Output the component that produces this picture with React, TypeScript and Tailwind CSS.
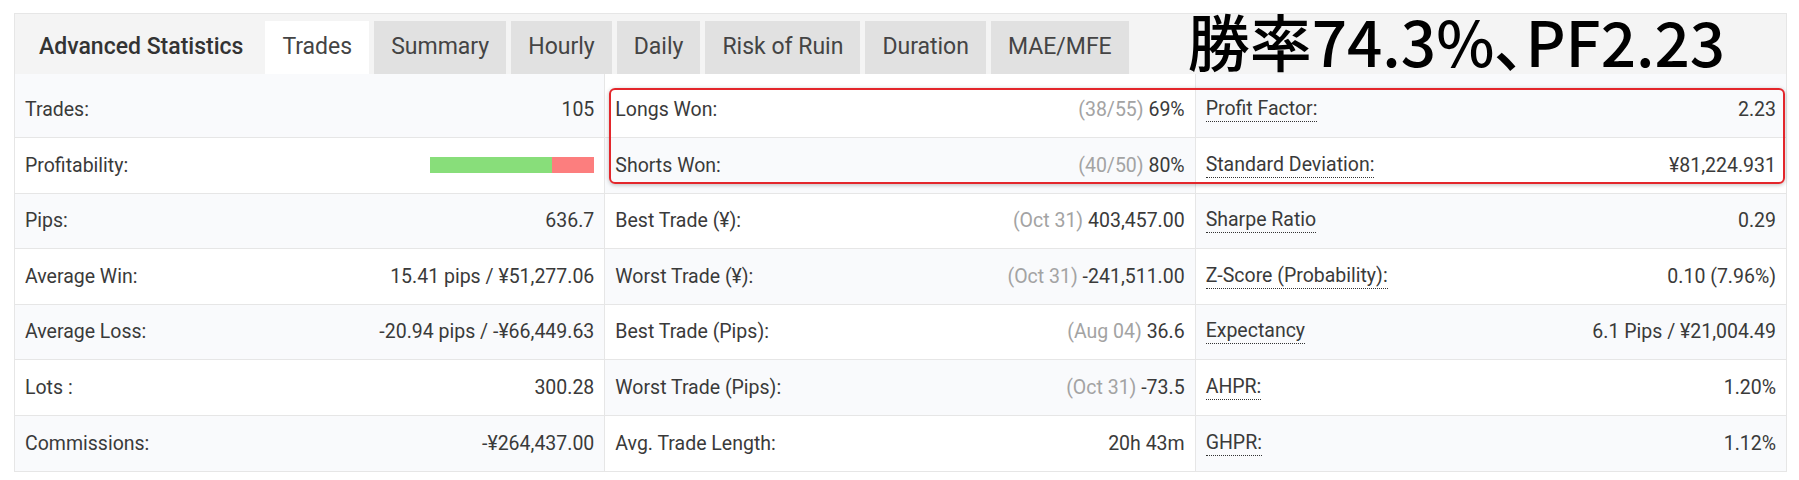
import React from "react";

type Cell = { label: string; pre?: string; value?: string; bar?: boolean };

const col1: Cell[] = [
  { label: "Trades:", value: "105" },
  { label: "Profitability:", bar: true },
  { label: "Pips:", value: "636.7" },
  { label: "Average Win:", value: "15.41 pips / ¥51,277.06" },
  { label: "Average Loss:", value: "-20.94 pips / -¥66,449.63" },
  { label: "Lots :", value: "300.28" },
  { label: "Commissions:", value: "-¥264,437.00" },
];

const col2: Cell[] = [
  { label: "Longs Won:", pre: "(38/55)", value: "69%" },
  { label: "Shorts Won:", pre: "(40/50)", value: "80%" },
  { label: "Best Trade (¥):", pre: "(Oct 31)", value: "403,457.00" },
  { label: "Worst Trade (¥):", pre: "(Oct 31)", value: "-241,511.00" },
  { label: "Best Trade (Pips):", pre: "(Aug 04)", value: "36.6" },
  { label: "Worst Trade (Pips):", pre: "(Oct 31)", value: "-73.5" },
  { label: "Avg. Trade Length:", value: "20h 43m" },
];

const col3: Cell[] = [
  { label: "Profit Factor:", value: "2.23" },
  { label: "Standard Deviation:", value: "¥81,224.931" },
  { label: "Sharpe Ratio", value: "0.29" },
  { label: "Z-Score (Probability):", value: "0.10 (7.96%)" },
  { label: "Expectancy", value: "6.1 Pips / ¥21,004.49" },
  { label: "AHPR:", value: "1.20%" },
  { label: "GHPR:", value: "1.12%" },
];

const tabs = ["Summary", "Hourly", "Daily", "Risk of Ruin", "Duration", "MAE/MFE"];

function Column({ cells, colIndex }: { cells: Cell[]; colIndex: number }) {
  return (
    <div className={colIndex < 2 ? "flex flex-col border-r border-[#e6e6e6]" : "flex flex-col"}>
      {cells.map((c, i) => {
        const light = colIndex === 1 ? i % 2 === 1 : i % 2 === 0;
        const first = i === 0;
        const last = i === cells.length - 1;
        return (
          <div
            key={i}
            className={[
              "flex items-center justify-between px-[10px]",
              first ? "h-[64px] pt-[8px]" : "h-[55.5px]",
              last ? "" : "border-b border-[#e6e6e6]",
              light ? "bg-[#f9fafc]" : "bg-white",
            ].join(" ")}
          >
            {colIndex === 2 ? (
              <span className="border-b border-dotted border-[#333] leading-[24px]">{c.label}</span>
            ) : (
              <span>{c.label}</span>
            )}
            {c.bar ? (
              <div className="flex h-[16px] w-[164px]">
                <div className="h-full w-[122px] bg-[#88de7a]" />
                <div className="h-full flex-1 bg-[#fc7e7e]" />
              </div>
            ) : (
              <span>
                {c.pre && <span className="text-[#a3a3a3]">{c.pre} </span>}
                {c.value}
              </span>
            )}
          </div>
        );
      })}
    </div>
  );
}

export default function App() {
  return (
    <div className="w-[1799px] h-[480px] bg-white pt-[13px] pl-[14px] font-['Roboto','Liberation_Sans',sans-serif]">
      <div className="relative w-[1773px] border border-[#e6e6e6]">
        <div className="flex h-[60px] items-end bg-[#f4f4f4] pl-[24px] text-[23px] text-[#444]">
          <div className="flex h-[53px] items-center mr-[22px] font-medium text-[#333]">
            Advanced Statistics
          </div>
          <div className="flex gap-[5px]">
            <div className="flex h-[53px] items-center bg-white px-[17px]">Trades</div>
            {tabs.map((t) => (
              <div key={t} className="flex h-[53px] items-center bg-[#e1e1e1] px-[17px]">
                {t}
              </div>
            ))}
          </div>
          <div className="ml-[59px] mb-[8px] self-end whitespace-nowrap font-['Noto_Sans_CJK_JP',sans-serif] text-[62px] font-medium leading-[52px] text-black [font-feature-settings:'palt']">
            勝率74.3%、PF2.23
          </div>
        </div>
        <div className="grid grid-cols-3 text-[19.5px] text-[#3a3a3a]">
          <Column cells={col1} colIndex={0} />
          <Column cells={col2} colIndex={1} />
          <Column cells={col3} colIndex={2} />
        </div>
        <div className="pointer-events-none absolute left-[594px] top-[74px] h-[96px] w-[1176px] rounded-[6px] border-2 border-[#e3262b] shadow-[0_1px_4px_rgba(0,0,0,0.25)]" />
      </div>
    </div>
  );
}
